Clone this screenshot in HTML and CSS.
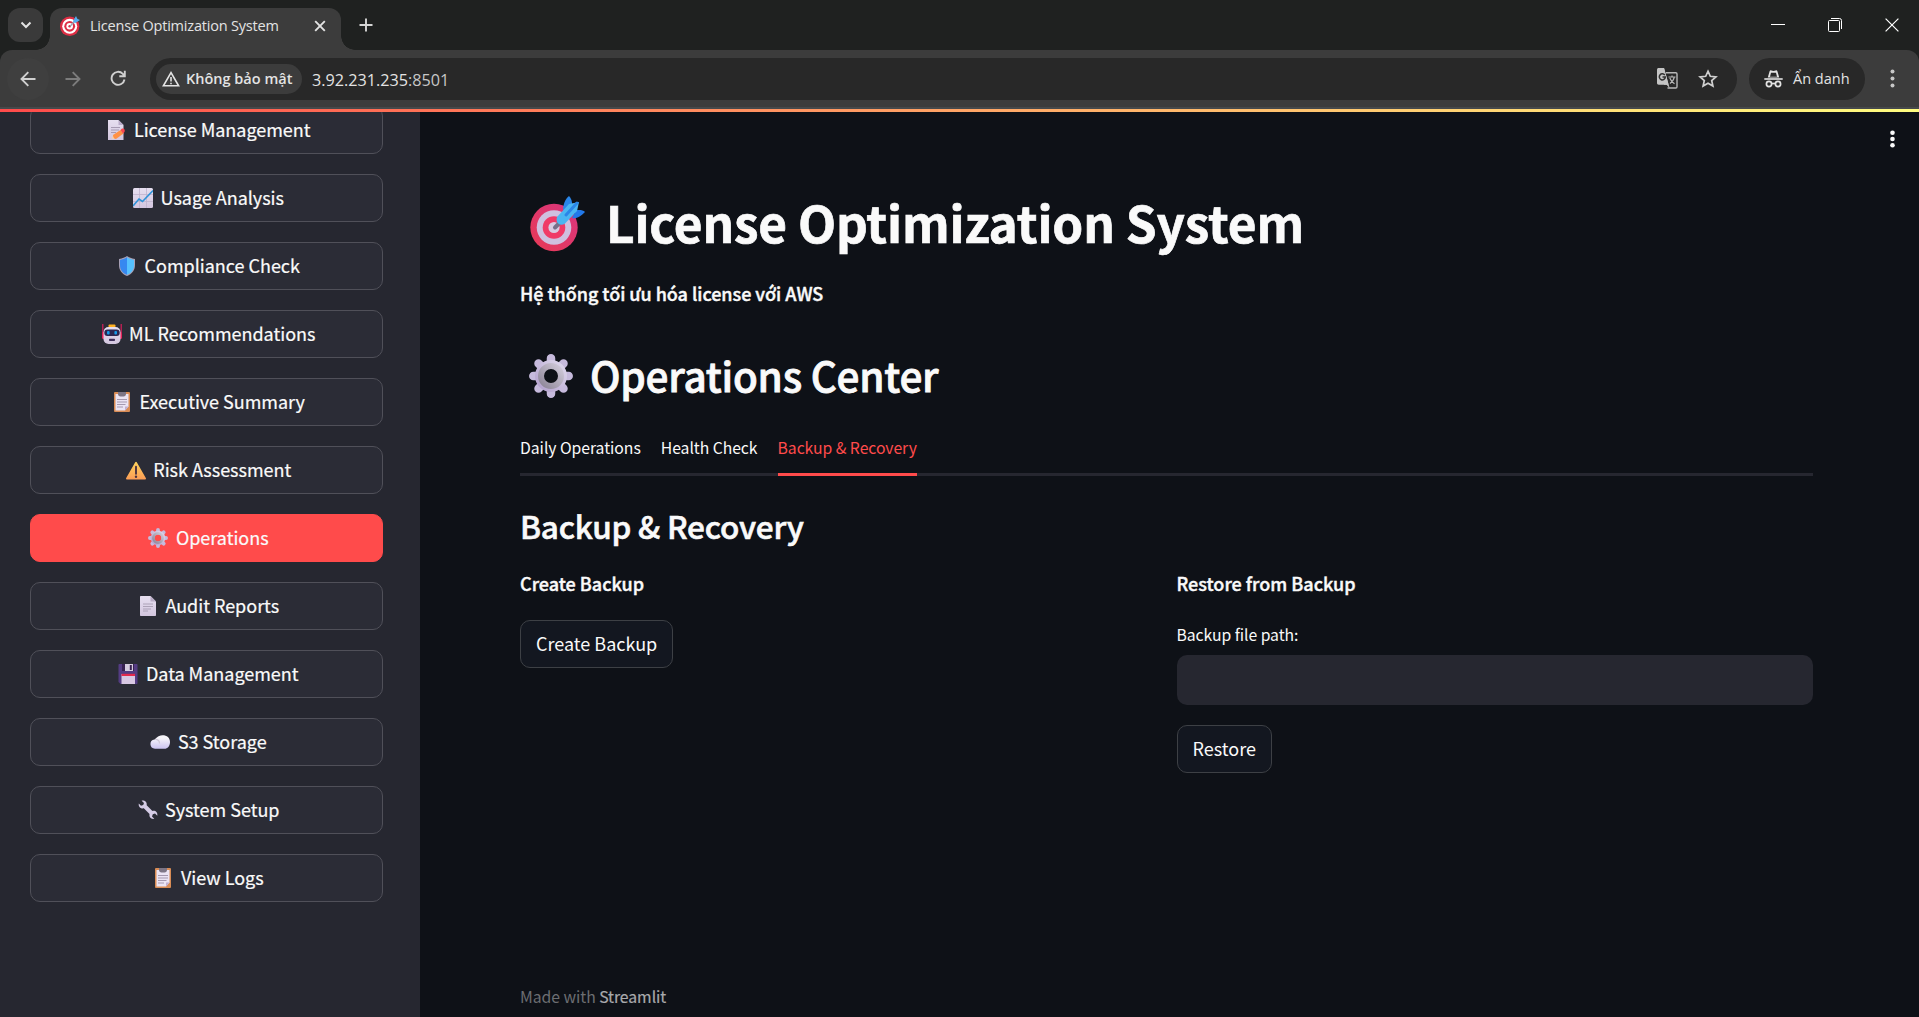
FILE: index.html
```html
<!DOCTYPE html>
<html lang="vi">
<head>
<meta charset="utf-8">
<title>License Optimization System</title>
<link rel="stylesheet" href="styles.css">
</head>
<body>
<svg class="defs" aria-hidden="true">
  <defs>
    <linearGradient id="g-page" x1="0" y1="0" x2="0" y2="1"><stop offset="0" stop-color="#e6dff0"/><stop offset="1" stop-color="#d3c6df"/></linearGradient>
    <linearGradient id="g-gear" x1="1" y1="0" x2="0" y2="1"><stop offset="0" stop-color="#dcd5ea"/><stop offset="1" stop-color="#b5a3cf"/></linearGradient>
    <linearGradient id="g-hub" x1="1" y1="0" x2="0" y2="1"><stop offset="0" stop-color="#cfc9d8"/><stop offset="1" stop-color="#8f8799"/></linearGradient>
    <linearGradient id="g-warn" x1="0" y1="0" x2="0" y2="1"><stop offset="0" stop-color="#ffd45c"/><stop offset="1" stop-color="#fb9c55"/></linearGradient>
    <linearGradient id="g-cloud" x1="0" y1="0" x2="0" y2="1"><stop offset="0.2" stop-color="#f7f5fa"/><stop offset="1" stop-color="#cbc3f0"/></linearGradient>
    <linearGradient id="g-disc" x1="1" y1="0" x2="0" y2="1"><stop offset="0" stop-color="#d8357f"/><stop offset="1" stop-color="#e83a55"/></linearGradient>
  </defs>
  <symbol id="e-memo" viewBox="0 0 20 20">
    <path d="M2 0h10.500l5 5v15H2z" fill="url(#g-page)"/><path d="M12.500 0v5h5z" fill="#b9abc9"/>
    <path d="M5 7.500h9M5 10h8M5 12.500h5" stroke="#a79bb4" stroke-width="1"/>
    <path d="M6 19l1-4 3 3z" fill="#ffd3a0"/><path d="M7 15l7.500-5 3 3.500-7.500 5.500c-2 0-3-2-3-4z" fill="#ff9147"/><path d="M14.500 10l1.500-1.500c2-.5 3.500 1.500 2.500 3.500L17 13.500z" fill="#f9474f"/>
  </symbol>
  <symbol id="e-chart" viewBox="0 0 20 20">
    <rect width="20" height="20" rx="1.500" fill="url(#g-page)"/><path d="M6.500 0v20M13.500 0v20M0 6.500h20M0 13.500h20" stroke="#bfb2cd" stroke-width=".8"/>
    <path d="M0 18l6-7 3.500 2.500L20 2.500" fill="none" stroke="#2f93d8" stroke-width="1.600"/>
  </symbol>
  <symbol id="e-shield" viewBox="0 0 20 20">
    <path d="M10 0c2 1.500 4.500 2.300 8 3v6c0 5.500-3 9-8 11-5-2-8-5.500-8-11V3c3.500-.7 6-1.500 8-3z" fill="#a7a0b5"/>
    <path d="M10 1.300C7.800 2.800 5.500 3.500 3 4v5c0 5 2.500 8 7 9.800z" fill="#3688f0"/><path d="M10 1.300c2.200 1.500 4.500 2.200 7 2.700v5c0 5-2.500 8-7 9.800z" fill="#55c1ff"/>
  </symbol>
  <symbol id="e-robot" viewBox="0 0 20 20">
    <path d="M.8 0v9M19.200 0v9" stroke="#d81e5b" stroke-width="1.200"/><rect x="0" y="8" width="3.500" height="7" rx="1.500" fill="#e9235b"/><rect x="16.500" y="8" width="3.500" height="7" rx="1.500" fill="#e9235b"/>
    <rect x="6.500" y=".6" width="7" height="3" rx="1" fill="#ffb021"/>
    <rect x="1.500" y="3" width="17" height="17" rx="5" fill="url(#g-page)"/><rect x="2.300" y="5.500" width="15.400" height="6.500" rx="3" fill="#2c2751"/>
    <rect x="5" y="7" width="2.600" height="3.600" rx="1" fill="#159be8"/><rect x="12.400" y="7" width="2.600" height="3.600" rx="1" fill="#159be8"/><rect x="7" y="14.700" width="6" height="2.300" rx=".8" fill="#40305b"/>
  </symbol>
  <symbol id="e-clip" viewBox="0 0 20 20">
    <rect x="2" y="0" width="16" height="20" rx="1" fill="#d98c55"/><path d="M3.500 2h13v12.500L13 18.500H3.500z" fill="#ebe4f4"/><path d="M13 18.500v-4h3.500z" fill="#c0aed0"/>
    <path d="M6 0h8v2c0 1.500-1 2.500-2.500 2.500h-3C7 4.500 6 3.500 6 2z" fill="#7d7585"/>
    <path d="M5 7.500h10M5 10h10M5 12.500h8.500M5 15h6" stroke="#a599b0" stroke-width="1"/>
  </symbol>
  <symbol id="e-warn" viewBox="0 0 20 20">
    <path d="M9.200 2.300c.4-.8 1.200-.8 1.600 0l9 15.800c.4.700.1 1.400-.7 1.400H.9c-.8 0-1.100-.7-.7-1.400z" fill="url(#g-warn)"/>
    <path d="M10 6.700v7" stroke="#4b3140" stroke-width="1.900" stroke-linecap="round"/><circle cx="10" cy="16.700" r="1.200" fill="#4b3140"/>
  </symbol>
  <symbol id="e-gear" viewBox="0 0 44 44">
    <path d="M22 4.300v5M34.500 9.500l-2.500 2.500M39.700 22h-5M34.500 34.500l-2.500-2.500M22 39.700v-5M9.500 34.500l2.500-2.500M4.300 22h5M9.500 9.500l2.500 2.500" stroke="#c6badc" stroke-width="8.500" stroke-linecap="round"/>
    <circle cx="22" cy="22" r="12" fill="none" stroke="url(#g-gear)" stroke-width="8"/><circle cx="22" cy="22" r="10" fill="none" stroke="url(#g-hub)" stroke-width="6"/>
  </symbol>
  <symbol id="e-page" viewBox="0 0 20 20">
    <path d="M2 1c0-.6.400-1 1-1h9.500L18 5.500V19c0 .6-.4 1-1 1H3c-.6 0-1-.4-1-1z" fill="url(#g-page)"/><path d="M12.500 0v5.500H18z" fill="#b9acc6"/>
    <path d="M5 8h10M5 10.500h10M5 13h8M5 15h5" stroke="#a79db2" stroke-width=".9"/>
  </symbol>
  <symbol id="e-disk" viewBox="0 0 20 20">
    <path d="M.5 1c0-.6.400-1 1-1h17c.6 0 1 .4 1 1v18c0 .6-.4 1-1 1H2.500l-2-2z" fill="#543c83"/><rect x="4" y="0" width="12" height="7" fill="#382252"/><rect x="7" y="0" width="8" height="7" fill="#d6cde0"/><rect x="11.800" y="1" width="2" height="5" fill="#382252"/>
    <rect x="3.500" y="10" width="13.500" height="10" fill="#d8c8e3"/><rect x="3.500" y="9.800" width="13.500" height="2.200" fill="#e3294d"/>
  </symbol>
  <symbol id="e-cloud" viewBox="0 0 20 20">
    <path d="M5 16.800a5 4.700 0 0 1-.5-9.300C6.500 6.500 7 3.500 12.500 3.200c4.500 0 7.500 2.500 7.500 6.800s-2.500 6.800-5.500 6.800z" fill="url(#g-cloud)"/><path d="M5.300 7.400C8 7.400 9.500 9.200 9.500 11.500" fill="none" stroke="#cfc8d8" stroke-width="1.100"/>
  </symbol>
  <symbol id="e-wrench" viewBox="0 0 20 20">
    <path d="M3.600.7L6 3l-.8 2L3 5.700.8 3.400C.2 6.500 2.500 9 5.800 8.300L11.500 14c-.6 3.200 1.600 5.400 4.800 4.800L14 16.500l.8-2.200 2.200-.8 2.300 2.300c.6-3.300-1.800-5.500-4.900-4.800L8.700 5.300C9.300 2.300 6.800.1 3.600.7z" fill="#d5cce6"/>
  </symbol>
  <symbol id="e-target" viewBox="0 0 56 56">
    <circle cx="24" cy="31.500" r="23.700" fill="url(#g-disc)"/><circle cx="24" cy="31.500" r="17.300" fill="#cfc0df"/><circle cx="24" cy="31.500" r="11.300" fill="#f03a67"/><circle cx="24" cy="31.500" r="5.600" fill="#d9cbe2"/>
    <path d="M25 31.500l4-4" stroke="#77708a" stroke-width="4" stroke-linecap="round"/>
    <path d="M33 14c0-5 2-11 6-14 2 2 3.500 5.500 3 9z" fill="#2a86e8"/><path d="M42 22c4 1.500 9-2 13-6-2-2-6-2.500-9-1.500z" fill="#2279ea"/>
    <path d="M27 21L39 8l10-2-2 9-12 12.500c-4 3-10 .5-8-6.500z" fill="#4ab6f2"/><path d="M36 19l11-12" stroke="#2a86e8" stroke-width="3" stroke-linecap="round"/>
  </symbol>
</svg>

<header class="chrome">
  <div class="tabstrip">
    <button class="tab-search"><svg width="12" height="8" viewBox="0 0 12 8"><path d="M1.500 1.500L6 6l4.500-4.500" fill="none" stroke="#e3e3e3" stroke-width="2"/></svg></button>
    <div class="tab">
      <svg class="favicon" viewBox="0 0 20 20"><circle cx="9.700" cy="10.300" r="9.700" fill="#dd2e44"/><circle cx="9.700" cy="10.300" r="7.500" fill="#fff"/><circle cx="9.700" cy="10.300" r="5.400" fill="#dd2e44"/><circle cx="9.700" cy="10.300" r="3.300" fill="#fff"/><circle cx="9.700" cy="10.300" r="1.300" fill="#dd2e44"/><path d="M10 10.500l5-6" stroke="#93a7b8" stroke-width="1.200"/><path d="M13 5l3-5 1.300 2.700L20 4l-5 3.200z" fill="#55acee"/></svg>
      <span class="tab-title">License Optimization System</span>
      <svg class="tab-close" width="12" height="12" viewBox="0 0 12 12"><path d="M1.200 1.200l9.600 9.600M10.800 1.200l-9.600 9.600" stroke="#e3e3e3" stroke-width="1.900"/></svg>
    </div>
    <svg class="tab-new" width="14" height="14" viewBox="0 0 14 14"><path d="M7 .5v13M.5 7h13" stroke="#d5d5d5" stroke-width="1.900"/></svg>
    <div class="window-controls">
      <svg width="14" height="14" viewBox="0 0 14 14"><path d="M0 6.500h14" stroke="#fff"/></svg>
      <svg width="14" height="14" viewBox="0 0 14 14" fill="none" stroke="#fff"><path d="M3 .5h8.500a2 2 0 0 1 2 2V11"/><rect x=".5" y="2.500" width="11" height="11" rx="1"/></svg>
      <svg width="14" height="14" viewBox="0 0 14 14"><path d="M.6.6l12.800 12.800M13.400.6L.6 13.400" stroke="#fff" stroke-width="1.200"/></svg>
    </div>
  </div>
  <div class="toolbar">
    <button class="nav-btn back"><svg width="16" height="16" viewBox="0 0 16 16" fill="none" stroke="#d0d0d0" stroke-width="1.900"><path d="M15.500 8H1.800M8.300 1.200L1.500 8l6.800 6.800"/></svg></button>
    <button class="nav-btn"><svg width="16" height="16" viewBox="0 0 16 16" fill="none" stroke="#7c7c7c" stroke-width="1.900"><path d="M.5 8h13.700M7.700 1.200L14.500 8l-6.800 6.800"/></svg></button>
    <button class="nav-btn"><svg width="17" height="17" viewBox="0 0 17 17" fill="none" stroke="#d0d0d0" stroke-width="1.900"><path d="M14.500 9.500A6.500 6.500 0 1 1 12.800 3.800L14.800 6M14.800.8V6.200H9.300"/></svg></button>
    <div class="omnibox">
      <div class="security"><svg width="18" height="16" viewBox="0 0 18 16"><path d="M9 1.700L1.400 14.800h15.200z" fill="none" stroke="#e3e3e3" stroke-width="1.600"/><path d="M9 6v4.600M9 11.700v1.600" stroke="#e3e3e3" stroke-width="1.600"/></svg><span>Không bảo mật</span></div>
      <span class="url">3.92.231.235<span class="port">:8501</span></span>
      <svg class="translate" width="21" height="21" viewBox="0 0 21 21"><path d="M9 4.700h9.800c.7 0 1.200.5 1.200 1.200v12.900c0 .7-.5 1.200-1.200 1.200H10.500" fill="none" stroke="#b8b8b8" stroke-width="1.400"/><path d="M1.700 0H7l4.500 16.700H1.700C.7 16.700 0 16 0 15V1.700C0 .7.700 0 1.700 0z" fill="#c4c4c4"/><path d="M7 0l1.400 4.500L12.600 20 9.500 16.700H7z" fill="#c4c4c4"/><path d="M7.800 7.200A3 3 0 1 0 8.300 9H5.500" fill="none" stroke="#303030" stroke-width="1.500"/><path d="M11.500 9h7M15 7.500V9M17.300 9.200c-.6 3-2.300 5-4.300 6.300M12.800 10c1 2.700 2.700 4.500 4.700 5.700" fill="none" stroke="#b8b8b8" stroke-width="1.200"/></svg>
      <svg class="star" width="20" height="19" viewBox="0 0 20 19"><path d="M10 2.200l2.300 5.100 5.600.5-4.200 3.700 1.200 5.500L10 14.200 5.100 17l1.200-5.500L2.100 7.800l5.600-.5z" fill="none" stroke="#d0d0d0" stroke-width="1.700"/></svg>
    </div>
    <div class="incognito"><svg width="19" height="18" viewBox="0 0 19 18"><path d="M3.800 7.500L5.600 1.300C5.800.5 6.500.1 7.300.4l2.200.6 2.200-.6c.8-.3 1.500.1 1.700.9l1.800 6.200z" fill="#e3e3e3"/><path d="M7 2.700l-1 4h7l-1-4" fill="#282828"/><path d="M.3 9h18.400" stroke="#e3e3e3" stroke-width="1.600"/><g fill="none" stroke="#e3e3e3" stroke-width="1.700"><circle cx="5" cy="14" r="2.600"/><circle cx="14" cy="14" r="2.600"/><path d="M7.500 13.500h4"/></g></svg><span>Ẩn danh</span></div>
    <svg class="menu" width="5" height="19" viewBox="0 0 5 19" fill="#c7c7c7"><circle cx="2.500" cy="2.500" r="2"/><circle cx="2.500" cy="9.500" r="2"/><circle cx="2.500" cy="16.500" r="2"/></svg>
  </div>
</header>

<div class="app">
  <aside class="sidebar">
    <nav class="nav">
      <button class="nav-item"><svg><use href="#e-memo"/></svg><span>License Management</span></button>
      <button class="nav-item"><svg><use href="#e-chart"/></svg><span>Usage Analysis</span></button>
      <button class="nav-item"><svg><use href="#e-shield"/></svg><span>Compliance Check</span></button>
      <button class="nav-item"><svg><use href="#e-robot"/></svg><span>ML Recommendations</span></button>
      <button class="nav-item"><svg><use href="#e-clip"/></svg><span>Executive Summary</span></button>
      <button class="nav-item"><svg><use href="#e-warn"/></svg><span>Risk Assessment</span></button>
      <button class="nav-item active"><svg><use href="#e-gear"/></svg><span>Operations</span></button>
      <button class="nav-item"><svg><use href="#e-page"/></svg><span>Audit Reports</span></button>
      <button class="nav-item"><svg><use href="#e-disk"/></svg><span>Data Management</span></button>
      <button class="nav-item"><svg><use href="#e-cloud"/></svg><span>S3 Storage</span></button>
      <button class="nav-item"><svg><use href="#e-wrench"/></svg><span>System Setup</span></button>
      <button class="nav-item"><svg><use href="#e-clip"/></svg><span>View Logs</span></button>
    </nav>
  </aside>
  <main class="main">
    <svg class="app-menu" width="5" height="18" viewBox="0 0 5 18" fill="#fafafa"><circle cx="2.500" cy="2.700" r="2.300"/><circle cx="2.500" cy="9" r="2.300"/><circle cx="2.500" cy="15.300" r="2.300"/></svg>
    <h1><svg><use href="#e-target"/></svg>License Optimization System</h1>
    <p class="subtitle">Hệ thống tối ưu hóa license với AWS</p>
    <h2><svg><use href="#e-gear"/></svg>Operations Center</h2>
    <div class="tabs"><a>Daily Operations</a><a>Health Check</a><a class="selected">Backup &amp; Recovery</a></div>
    <h3>Backup &amp; Recovery</h3>
    <div class="columns">
      <section>
        <p class="strong">Create Backup</p>
        <button class="btn">Create Backup</button>
      </section>
      <section>
        <p class="strong">Restore from Backup</p>
        <label class="field">Backup file path:<input type="text"></label>
        <button class="btn">Restore</button>
      </section>
    </div>
    <footer>Made with <a>Streamlit</a></footer>
  </main>
  <div class="decoration"></div>
</div>
</body>
</html>
```
FILE: styles.css
```css
* { box-sizing: border-box; }

body {
  margin: 0;
  height: 1017px;
  overflow: hidden;
  display: flex;
  flex-direction: column;
  background: #0e1117;
  color: #fafafa;
  font: 18px/32px "Noto Sans CJK SC", "Noto Sans", sans-serif;
}

h1, h2, h3, p { margin: 0; }
svg { display: block; flex: none; }
button { font: inherit; color: inherit; border: 0; padding: 0; background: none; }
.defs { position: absolute; width: 0; height: 0; }

/* Browser window */
.chrome {
  flex: none;
  height: 109px;
  background: #1f2120;
  font: 14.5px/20px "Open Sans", "Noto Sans", sans-serif;
  color: #e3e3e3;
}
.tabstrip { height: 50px; display: flex; align-items: flex-start; padding: 8px 0 0 8px; }
.tab-search {
  width: 35px; height: 34px; border-radius: 12px; background: #3a3a3a;
  display: flex; align-items: center; justify-content: center;
}
.tab {
  position: relative;
  width: 291px; height: 42px; margin-left: 7px; padding: 0 15px 7px 10px;
  border-radius: 12px 12px 0 0; background: #3c3c3c;
  display: flex; align-items: center;
}
.tab::before, .tab::after {
  content: ""; position: absolute; bottom: 0; width: 14px; height: 14px;
}
.tab::before { left: -14px; background: radial-gradient(circle at 0 0, transparent 13.500px, #3c3c3c 14px); }
.tab::after { right: -14px; background: radial-gradient(circle at 100% 0, transparent 13.500px, #3c3c3c 14px); }
.favicon { width: 20px; height: 20px; }
.tab-title { margin-left: 10px; letter-spacing: -.2px; white-space: nowrap; }
.tab-close { margin-left: auto; }
.tab-new { margin: 10px 0 0 18px; }
.window-controls { margin: 10px 20px 0 auto; display: flex; gap: 43px; }

.toolbar {
  height: 59px; padding: 0 24px 0 7px; background: #3c3c3c;
  border-radius: 12px 12px 0 0; border-bottom: 2px solid #46494b;
  display: flex; align-items: center;
}
.nav-btn { width: 42px; height: 42px; border-radius: 50%; margin-right: 3px; display: flex; align-items: center; justify-content: center; }
.nav-btn.back { background: #3f3f3f; }
.omnibox {
  flex: 1; height: 42px; margin-left: 8px; padding: 0 19px 0 6px; border-radius: 21px;
  background: #282828; display: flex; align-items: center;
}
.security {
  height: 30px; width: 146px; padding-left: 6px; border-radius: 15px; background: #3c3c3c;
  display: flex; align-items: center; gap: 6px; font-weight: 600; white-space: nowrap;
}
.url { margin-left: 10px; padding-top: 2px; font-size: 16.2px; }
.port { color: #c7c7c7; }
.translate { margin-left: auto; }
.star { margin-left: 20px; }
.incognito {
  width: 116px; height: 42px; margin-left: 12px; padding-left: 15px; border-radius: 21px;
  background: #282828; display: flex; align-items: center; gap: 10px; white-space: nowrap;
}
.menu { margin-left: 25px; }

/* Application */
.app { position: relative; flex: 1; min-height: 0; display: flex; }
.decoration {
  position: absolute; inset: 0 0 auto 0; height: 3px;
  background: linear-gradient(90deg, #ff4b4b, #fffd80);
}
.sidebar { width: 420px; padding: 0 37px 0 30px; overflow: hidden; background: #262730; }
.nav { display: flex; flex-direction: column; gap: 20px; margin-top: -3px; }
.nav-item {
  height: 48px; flex: none; border: 1px solid #505059; border-radius: 10px; background: #2b2c36;
  display: flex; align-items: center; justify-content: center;
}
.nav-item svg { width: 20px; height: 20px; margin: 0 7.5px 0 4px; }
.nav-item span { padding-bottom: 2px; letter-spacing: -.02px; -webkit-text-stroke: .2px; }
.nav-item.active { background: #ff4b4b; border-color: #ff4b4b; }

.main { position: relative; flex: 1; min-width: 0; padding: 80px 106px 7px 100px; display: flex; flex-direction: column; }
.app-menu { position: absolute; top: 21px; right: 24px; }
h1 { display: flex; font-size: 49.5px; line-height: 66px; font-weight: 700; letter-spacing: -.15px; white-space: nowrap; -webkit-text-stroke: .7px; }
h1 svg { width: 56px; height: 56px; margin: 7px 20px 0 10px; }
.subtitle { margin-top: 22px; font-weight: 500; letter-spacing: -.03px; -webkit-text-stroke: .4px; }
h2 { display: flex; margin-top: 39px; font-size: 40.5px; line-height: 54px; font-weight: 500; letter-spacing: -.25px; white-space: nowrap; -webkit-text-stroke: .8px; }
h2 svg { width: 44px; height: 44px; margin: 6px 17px 0 9px; }
.tabs {
  margin-top: 21px; height: 53px; display: flex; gap: 20px;
  font-size: 15.75px; line-height: 49px; letter-spacing: -.05px;
  box-shadow: inset 0 -3px #262730;
}
.tabs .selected { color: #ff4b4b; border-bottom: 3px solid #ff4b4b; }
h3 { margin-top: 28px; font-size: 31.5px; line-height: 42px; font-weight: 500; letter-spacing: -.2px; -webkit-text-stroke: .6px; }
.columns { margin-top: 21px; display: grid; grid-template-columns: 1fr 1fr; column-gap: 20px; }
.columns section { display: flex; flex-direction: column; align-items: flex-start; }
.strong { font-weight: 500; -webkit-text-stroke: .4px; }
.btn {
  height: 48px; margin-top: 21px; padding: 0 15px 2px; border: 1px solid #3d4045; border-radius: 10px;
  background: #131720; white-space: nowrap;
}
.field { width: 100%; margin-top: 23px; font-size: 15.75px; line-height: 26px; letter-spacing: -.05px; }
.field input {
  display: block; width: 100%; height: 50px; margin-top: 7px; border: 0; border-radius: 10px; background: #262730;
}
.field + .btn { margin-top: 20px; }
footer { margin-top: auto; font-size: 15.75px; line-height: 26px; letter-spacing: -.05px; color: #6c6e72; }
footer a { color: #a9aaad; -webkit-text-stroke: .2px; }
```
